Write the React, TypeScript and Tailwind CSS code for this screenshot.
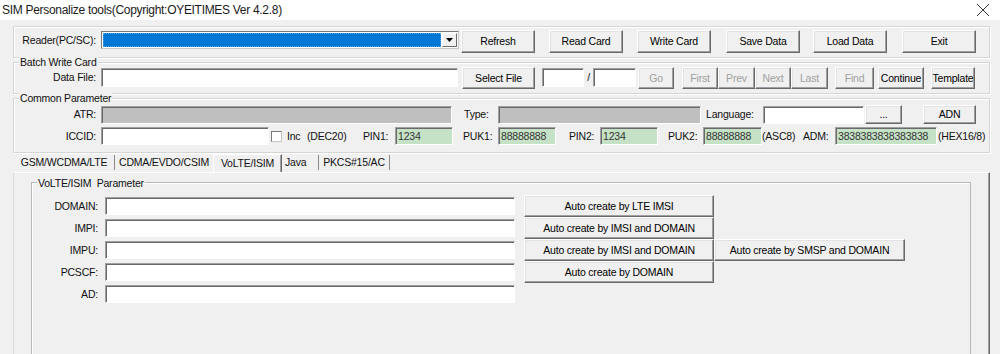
import React from "react";

const btnBase =
  "flex items-center justify-center shrink-0 bg-[#f0f0f0] border border-t-white border-l-white border-r-[#696969] border-b-[#696969] shadow-[inset_-1px_-1px_0_#a0a0a0,inset_1px_1px_0_#e3e3e3] whitespace-nowrap leading-none";
const sunken =
  "shrink-0 border border-t-[#a0a0a0] border-l-[#a0a0a0] border-r-[#ffffff] border-b-[#ffffff] shadow-[inset_1px_1px_0_#696969]";
const groupBox =
  "relative border border-[#d5d5d5] shadow-[inset_1px_1px_0_#ffffff,1px_1px_0_#ffffff]";
const legend =
  "absolute left-[5px] top-[-7px] px-[1px] h-[12px] leading-[12px] bg-[#f0f0f0] whitespace-nowrap";

function Btn({
  className,
  children,
  disabled,
}: {
  className: string;
  children: React.ReactNode;
  disabled?: boolean;
}) {
  return (
    <div className={`${btnBase} ${disabled ? "text-[#a0a0a0]" : "text-black"} ${className}`}>
      {children}
    </div>
  );
}

function Label({ className, children }: { className: string; children: React.ReactNode }) {
  return <div className={`flex items-center shrink-0 whitespace-nowrap leading-none ${className}`}>{children}</div>;
}

function Field({ className, children }: { className: string; children?: React.ReactNode }) {
  return (
    <div className={`${sunken} flex items-center pl-[2px] leading-none text-[#333333] whitespace-nowrap overflow-hidden ${className}`}>
      {children}
    </div>
  );
}

export default function App() {
  return (
    <div className="w-[1000px] h-[354px] overflow-hidden bg-[#f0f0f0] text-[10.5px] tracking-[-0.2px] text-[#111111] font-['Liberation_Sans',Arial,sans-serif]">
      {/* Title bar */}
      <div className="h-[20px] bg-white flex items-center justify-between pl-[2px] pr-[10px]">
        <span className="text-[12px] tracking-[-0.3px] text-[#1a1a1a] leading-none">
          SIM Personalize tools(Copyright:OYEITIMES Ver 4.2.8)
        </span>
        <svg width="14" height="14" viewBox="0 0 14 14">
          <path d="M1 1 L13 13 M13 1 L1 13" stroke="#333333" strokeWidth="1" fill="none" />
        </svg>
      </div>

      <div className="ml-[13px] w-[977px]">
        {/* Reader group */}
        <div className={`${groupBox} mt-[6px] h-[32px] flex items-start`}>
          <Label className="w-[82px] mt-[4px] h-[18px] justify-end">Reader(PC/SC):</Label>
          <div className="ml-[5px] mt-[4px] w-[358px] h-[18px] flex bg-white border border-t-[#7a7a7a] border-l-[#7a7a7a] border-r-[#c8c8c8] border-b-[#c8c8c8] p-px">
            <div className="flex-1 bg-[#0078d7] border border-dotted border-[#5aa0e0]" />
            <div className="w-[15px] ml-px flex items-center justify-center bg-[#f0f0f0] border border-t-white border-l-white border-r-[#696969] border-b-[#696969]">
              <svg width="7" height="4" viewBox="0 0 7 4">
                <path d="M0 0 L7 0 L3.5 4 Z" fill="#000000" />
              </svg>
            </div>
          </div>
          <Btn className="ml-[2px] mt-[3px] w-[74px] h-[23px]">Refresh</Btn>
          <Btn className="ml-[14px] mt-[3px] w-[74px] h-[23px]">Read Card</Btn>
          <Btn className="ml-[14px] mt-[3px] w-[74px] h-[23px]">Write Card</Btn>
          <Btn className="ml-[15px] mt-[3px] w-[74px] h-[23px]">Save Data</Btn>
          <Btn className="ml-[13px] mt-[3px] w-[74px] h-[23px]">Load Data</Btn>
          <Btn className="ml-[15px] mt-[3px] w-[74px] h-[23px]">Exit</Btn>
        </div>

        {/* Batch Write Card */}
        <div className={`${groupBox} mt-[4px] h-[32px] flex items-start`}>
          <div className={legend}>Batch Write Card</div>
          <Label className="w-[82px] mt-[5px] h-[19px] justify-end">Data File:</Label>
          <Field className="ml-[5px] mt-[5px] w-[357px] h-[19px] bg-white" />
          <Btn className="ml-[4px] mt-[4px] w-[73px] h-[22px]">Select File</Btn>
          <Field className="ml-[7px] mt-[5px] w-[42px] h-[19px] bg-white" />
          <Label className="w-[9px] mt-[5px] h-[19px] justify-center">/</Label>
          <Field className="mt-[5px] w-[43px] h-[19px] bg-white" />
          <Btn className="ml-[2px] mt-[4px] w-[36px] h-[22px]" disabled>Go</Btn>
          <Btn className="ml-[8px] mt-[4px] w-[36px] h-[22px]" disabled>First</Btn>
          <Btn className="mt-[4px] w-[37px] h-[22px]" disabled>Prev</Btn>
          <Btn className="mt-[4px] w-[36px] h-[22px]" disabled>Next</Btn>
          <Btn className="mt-[4px] w-[37px] h-[22px]" disabled>Last</Btn>
          <Btn className="ml-[7px] mt-[4px] w-[39px] h-[22px]" disabled>Find</Btn>
          <Btn className="ml-[4px] mt-[4px] w-[46px] h-[22px]">Continue</Btn>
          <Btn className="ml-[7px] mt-[4px] w-[44px] h-[22px]">Template</Btn>
        </div>

        {/* Common Parameter */}
        <div className={`${groupBox} mt-[4px] h-[55px] flex flex-col`}>
          <div className={legend}>Common Parameter</div>
          <div className="mt-[6px] h-[19px] flex items-center">
            <Label className="w-[82px] h-[18px] justify-end">ATR:</Label>
            <Field className="ml-[5px] w-[351px] h-[18px] bg-[#bfbfbf]" />
            <Label className="ml-[12px] w-[34px] h-[18px]">Type:</Label>
            <Field className="w-[203px] h-[18px] bg-[#bfbfbf]" />
            <Label className="ml-[5px] w-[57px] h-[18px]">Language:</Label>
            <Field className="w-[101px] h-[18px] bg-white" />
            <Btn className="ml-[1px] w-[37px] h-[19px] text-[#555555]">...</Btn>
            <Btn className="ml-[21px] w-[53px] h-[19px]">ADN</Btn>
          </div>
          <div className="mt-[3px] h-[18px] flex items-center">
            <Label className="w-[82px] h-[18px] justify-end">ICCID:</Label>
            <Field className="ml-[5px] w-[168px] h-[18px] bg-white" />
            <div className="ml-[2px] w-[11px] h-[11px] shrink-0 bg-white border border-t-[#7a7a7a] border-l-[#7a7a7a] border-r-[#c8c8c8] border-b-[#c8c8c8]" />
            <Label className="ml-[5px] w-[20px] h-[18px]">Inc</Label>
            <Label className="w-[56px] h-[18px]">(DEC20)</Label>
            <Label className="w-[32px] h-[18px]">PIN1:</Label>
            <Field className="w-[58px] h-[18px] bg-[#c6e2c6]">1234</Field>
            <Label className="ml-[10px] w-[35px] h-[18px]">PUK1:</Label>
            <Field className="w-[58px] h-[18px] bg-[#c6e2c6]">88888888</Field>
            <Label className="ml-[13px] w-[31px] h-[18px]">PIN2:</Label>
            <Field className="w-[58px] h-[18px] bg-[#c6e2c6]">1234</Field>
            <Label className="ml-[10px] w-[35px] h-[18px]">PUK2:</Label>
            <Field className="w-[59px] h-[18px] bg-[#c6e2c6]">88888888</Field>
            <Label className="w-[41px] h-[18px]">(ASC8)</Label>
            <Label className="w-[32px] h-[18px]">ADM:</Label>
            <Field className="w-[102px] h-[18px] bg-[#c6e2c6]">3838383838383838</Field>
            <Label className="ml-[1px] h-[18px]">(HEX16/8)</Label>
          </div>
        </div>

        {/* Tabs */}
        <div className="h-[19px] flex items-stretch">
          <div className="ml-[1px] w-[100px] flex items-center justify-center whitespace-nowrap leading-none">GSM/WCDMA/LTE</div>
          <div className="w-px h-[15px] self-center bg-[#8a8a8a]" />
          <div className="w-[98px] flex items-center justify-center whitespace-nowrap leading-none">CDMA/EVDO/CSIM</div>
          <div className="w-[69px] mt-[1px] flex items-center justify-center whitespace-nowrap leading-none border-t border-l border-r border-t-white border-l-white border-r-[#696969] shadow-[inset_-1px_0_0_#a0a0a0]">
            VoLTE/ISIM
          </div>
          <div className="w-[36px] pl-[3px] flex items-center whitespace-nowrap leading-none">Java</div>
          <div className="w-px h-[15px] self-center bg-[#8a8a8a]" />
          <div className="w-[70px] flex items-center justify-center whitespace-nowrap leading-none">PKCS#15/AC</div>
          <div className="w-px h-[15px] self-center bg-[#8a8a8a]" />
        </div>

        {/* Tab panel */}
        <div className="h-[200px] border-t border-l border-r border-t-white border-l-[#dadada] border-r-[#696969] shadow-[inset_-1px_0_0_#a0a0a0] pt-[9px]">
          <div className="relative ml-[17px] w-[940px] h-[180px] border border-[#b8b8b8] shadow-[inset_1px_1px_0_#ffffff]">
            <div className="absolute left-[5px] top-[-6px] px-[1px] h-[12px] leading-[12px] bg-[#f0f0f0] whitespace-nowrap">
              VoLTE/ISIM&nbsp; Parameter
            </div>
            <div className="mt-[12px] flex flex-col">
              <div className="h-[22px] flex items-start">
                <Label className="w-[66px] mt-[2px] h-[18px] justify-end">DOMAIN:</Label>
                <Field className="ml-[7px] mt-[2px] w-[410px] h-[18px] bg-white" />
                <Btn className="ml-[9px] w-[190px] h-[22px]">Auto create by LTE IMSI</Btn>
              </div>
              <div className="h-[22px] flex items-start">
                <Label className="w-[66px] mt-[2px] h-[18px] justify-end">IMPI:</Label>
                <Field className="ml-[7px] mt-[2px] w-[410px] h-[18px] bg-white" />
                <Btn className="ml-[9px] w-[190px] h-[22px]">Auto create by IMSI and DOMAIN</Btn>
              </div>
              <div className="h-[22px] flex items-start">
                <Label className="w-[66px] mt-[2px] h-[18px] justify-end">IMPU:</Label>
                <Field className="ml-[7px] mt-[2px] w-[410px] h-[18px] bg-white" />
                <Btn className="ml-[9px] w-[190px] h-[22px]">Auto create by IMSI and DOMAIN</Btn>
                <Btn className="w-[191px] h-[22px]">Auto create by SMSP and DOMAIN</Btn>
              </div>
              <div className="h-[22px] flex items-start">
                <Label className="w-[66px] mt-[2px] h-[18px] justify-end">PCSCF:</Label>
                <Field className="ml-[7px] mt-[2px] w-[410px] h-[18px] bg-white" />
                <Btn className="ml-[9px] w-[190px] h-[22px]">Auto create by DOMAIN</Btn>
              </div>
              <div className="h-[22px] flex items-start">
                <Label className="w-[66px] mt-[2px] h-[18px] justify-end">AD:</Label>
                <Field className="ml-[7px] mt-[2px] w-[410px] h-[18px] bg-white" />
              </div>
            </div>
          </div>
        </div>
      </div>
    </div>
  );
}
